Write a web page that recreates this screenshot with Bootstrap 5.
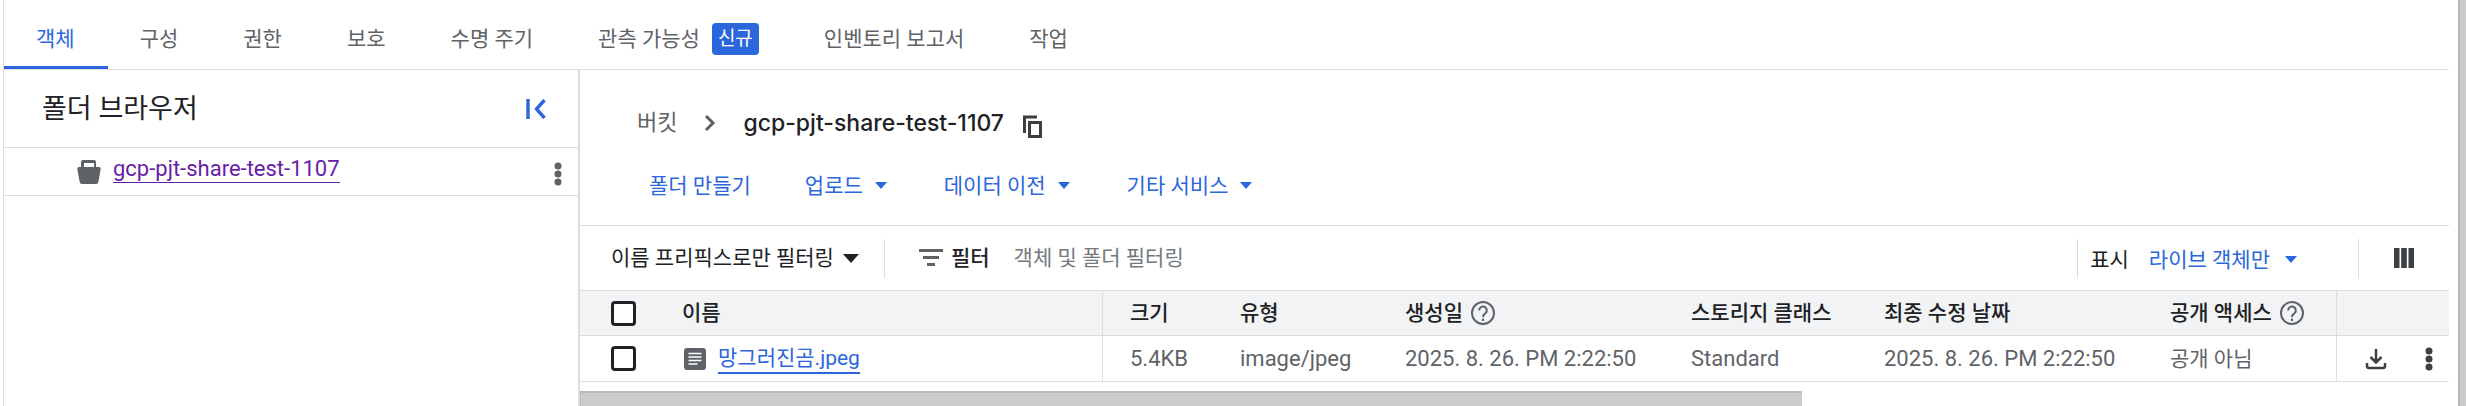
<!DOCTYPE html>
<html lang="ko">
<head>
<meta charset="utf-8">
<meta name="viewport" content="width=device-width, initial-scale=1">
<title>버킷 세부정보</title>
<link rel="stylesheet" href="https://cdn.jsdelivr.net/npm/bootstrap@5.3.0/dist/css/bootstrap.min.css">
<style>
:root{--line:#dadce0;--ink:#202124;--muted:#5f6368;--brand:#2b66dc}
body{font-family:Roboto,"Noto Sans CJK KR",sans-serif;font-size:21px;line-height:30px;color:var(--ink);background:#fff}
svg{display:block;flex:none}
.page-shell{min-height:100vh;padding-left:3px;overflow:hidden}
.page-body{border-left:1px solid var(--line);margin-right:9px;min-width:0}
.scroll-v{width:8px;flex:none;background:#cbcbcb;border-left:2px solid #b8b8b8}
.tabs-bar{height:70px;border-bottom:1px solid var(--line)}
.tabs-bar .nav-link{display:flex;align-items:center;color:var(--muted);padding:12px 33px 0 32px;height:69px;border-bottom:3px solid transparent;white-space:nowrap}
.tabs-bar .nav-link.active{color:var(--brand);border-bottom-color:var(--brand)}
.tag-new{background:var(--brand);color:#fff;font-size:19px;line-height:32px;padding:0 6px;border-radius:4px;margin-left:12px}
.folder-pane{width:576px;border-right:2px solid var(--line);flex:none}
.folder-head{height:78px;border-bottom:1px solid var(--line);padding:0 32px 0 38px}
.folder-head h2{font-size:27px;font-weight:400;line-height:36px;margin:0}
.folder-row{height:48px;border-bottom:1px solid var(--line);padding:4px 16px 0 73px}
.folder-row a{font-size:22px;line-height:26px;color:#681da8;text-decoration:none;border-bottom:1px solid #681da8;margin:0 auto 8px 12px}
.plain-btn{border:0;background:none;padding:0;color:inherit;font:inherit;display:flex;align-items:center;white-space:nowrap}
.crumbs{padding:16px 0 0 57px;height:89px}
.crumbs a{color:var(--muted);text-decoration:none;font-size:22px}
.crumbs h1{font-family:Inter,Roboto,sans-serif;font-size:23px;line-height:34px;font-weight:500;margin:0 18px 0 0}
.chevron{margin:0 22px}
.action-row{height:67px;padding:0 0 13px 69px;border-bottom:1px solid var(--line);color:var(--brand)}
.action-row .plain-btn{gap:11px;margin-right:56px}
.action-row .plain-btn:first-child{margin-right:54px}
.filter-row{height:64px;padding-left:31px}
.rule-v{width:1px;height:39px;background:var(--line)}
.filter-row label{font-weight:500}
.filter-input{border:0;outline:0;padding:0;background:none;min-width:0;color:var(--ink)}
.filter-input::placeholder{color:#75797d;opacity:1}
.show-label{margin:0 20px 0 12px}
.show-pick{color:var(--brand);gap:14px;margin-right:60px}
.columns-btn{margin:0 35px}
.objects{table-layout:fixed;width:100%;margin:0;border-collapse:separate;border-spacing:0;white-space:nowrap}
.objects th,.objects td{padding:0 0 0 27px;vertical-align:middle;border-bottom:1px solid var(--line)}
.objects th{height:46px;font-weight:500;background:#f1f3f4;border-top:1px solid var(--line)}
.objects td{height:46px;color:var(--muted)}
.objects .latin{font-size:22px}
.objects .edge{border-right:1px solid var(--line)}
.objects .pick{padding-left:31px}
.objects .label-col{padding-left:0}
.objects .form-check-input{width:25px;height:25px;margin:0;border:3px solid var(--ink);border-radius:4px;display:block}
.objects a{color:var(--brand);text-decoration:none;border-bottom:2px solid var(--brand);line-height:28px;margin-left:12px}
.c-pick{width:102px}.c-size{width:110px}.c-type{width:165px}.c-date{width:286px}.c-class{width:193px}.c-modified{width:286px}.c-access{width:194px}.c-act{width:112px}
.scroll-h{height:15px;margin-top:9px}
.scroll-h div{height:100%;background:#cbcbcb;border-top:2px solid #b8b8b8;border-left:1px solid #b8b8b8}
</style>
</head>
<body>
<div class="page-shell d-flex">
 <div class="page-body flex-grow-1 d-flex flex-column">
  <nav class="tabs-bar nav flex-nowrap">
   <a class="nav-link active" href="#" aria-current="page">객체</a>
   <a class="nav-link" href="#">구성</a>
   <a class="nav-link" href="#">권한</a>
   <a class="nav-link" href="#">보호</a>
   <a class="nav-link" href="#">수명 주기</a>
   <a class="nav-link" href="#">관측 가능성<span class="tag-new">신규</span></a>
   <a class="nav-link" href="#">인벤토리 보고서</a>
   <a class="nav-link" href="#">작업</a>
  </nav>
  <div class="d-flex flex-grow-1">
   <aside class="folder-pane">
    <div class="folder-head d-flex align-items-center justify-content-between">
     <h2>폴더 브라우저</h2>
     <button class="plain-btn" type="button" aria-label="패널 접기"><svg width="20" height="20" viewBox="0 0 20 20" fill="none" stroke="#2b66dc" stroke-width="3.400"><path d="M2 0v20M18.500 1 10.500 10l8 9"/></svg></button>
    </div>
    <div class="folder-row d-flex align-items-center">
     <svg class="mb-1" width="24" height="24" viewBox="0 0 24 24" fill="#5f6368"><path fill-rule="evenodd" d="M6 0h11q2 0 2 2v5h3q2 0 1.700 2l-2.200 12.500q-.4 2.500-2.500 2.500H5q-2 0-2.400-2.500L.3 9Q0 7 2 7h2V2q0-2 2-2zm1 3v4h10V3z"/></svg>
     <a href="#">gcp-pjt-share-test-1107</a>
     <button class="plain-btn" type="button" aria-label="폴더 메뉴"><svg width="8" height="24" viewBox="0 0 8 24" fill="#5f6368"><circle cx="4" cy="4" r="3.500"/><circle cx="4" cy="12" r="3.500"/><circle cx="4" cy="20" r="3.500"/></svg></button>
    </div>
   </aside>
   <main class="flex-grow-1 d-flex flex-column">
    <div class="crumbs d-flex align-items-center">
     <a href="#">버킷</a>
     <svg class="chevron" width="22" height="18" viewBox="0 0 22 18" fill="none" stroke="#5f6368" stroke-width="3"><path d="M7 2l7 7-7 7"/></svg>
     <h1>gcp-pjt-share-test-1107</h1>
     <button class="plain-btn pt-2" type="button" aria-label="복사"><svg width="22" height="24" viewBox="0 0 22 24" fill="none" stroke="#3c4043" stroke-width="3"><path d="M15 2H2.500v16M7.500 7.500h11v14h-11z"/></svg></button>
    </div>
    <div class="action-row d-flex align-items-center">
     <button class="plain-btn" type="button">폴더 만들기</button>
     <button class="plain-btn" type="button">업로드<svg width="14" height="8" viewBox="0 0 14 8" fill="#2b66dc"><path d="M1 0h12L7 7z"/></svg></button>
     <button class="plain-btn" type="button">데이터 이전<svg width="14" height="8" viewBox="0 0 14 8" fill="#2b66dc"><path d="M1 0h12L7 7z"/></svg></button>
     <button class="plain-btn" type="button">기타 서비스<svg width="14" height="8" viewBox="0 0 14 8" fill="#2b66dc"><path d="M1 0h12L7 7z"/></svg></button>
    </div>
    <div class="filter-row d-flex align-items-center">
     <button class="plain-btn" type="button">이름 프리픽스로만 필터링<svg class="ms-2" width="18" height="9" viewBox="0 0 18 9" fill="#202124"><path d="M1 0h16L9 9z"/></svg></button>
     <span class="rule-v ms-4"></span>
     <svg class="filter-mark" width="58" height="18" viewBox="-34 0 58 18" fill="#5f6368"><path d="M0 0h24v3H0zM4 7h16v3H4zM8 14h8v3H8z"/></svg>
     <label class="ms-2" for="filter">필터</label>
     <input id="filter" class="filter-input flex-grow-1 ms-4" type="text" placeholder="객체 및 폴더 필터링">
     <span class="rule-v"></span>
     <span class="show-label pt-1">표시</span>
     <button class="plain-btn show-pick pt-1" type="button">라이브 객체만<svg width="14" height="8" viewBox="0 0 14 8" fill="#2b66dc"><path d="M1 0h12L7 7z"/></svg></button>
     <span class="rule-v"></span>
     <button class="plain-btn columns-btn" type="button" aria-label="열 표시"><svg width="20" height="20" viewBox="0 0 20 20" fill="#3c4043"><path d="M0 0h5.500v20H0zM7.200 0h5.600v20H7.200zM14.500 0H20v20h-5.500z"/></svg></button>
    </div>
    <table class="objects">
     <colgroup><col class="c-pick"><col><col class="c-size"><col class="c-type"><col class="c-date"><col class="c-class"><col class="c-modified"><col class="c-access"><col class="c-act"></colgroup>
     <thead><tr>
      <th class="pick"><input class="form-check-input" type="checkbox" aria-label="모두 선택"></th>
      <th class="label-col edge">이름</th><th>크기</th><th>유형</th>
      <th><span class="d-flex align-items-center gap-2">생성일<svg width="24" height="24" viewBox="0 0 24 24" fill="none" stroke="#5f6368" stroke-width="2"><circle cx="12" cy="12" r="11"/><path d="M8.200 9.500a3.800 3.800 0 1 1 6.600 2.400C13.300 13.400 12 13.700 12 16M12 17.500v2.500"/></svg></span></th>
      <th>스토리지 클래스</th><th>최종 수정 날짜</th>
      <th class="edge"><span class="d-flex align-items-center gap-2">공개 액세스<svg width="24" height="24" viewBox="0 0 24 24" fill="none" stroke="#5f6368" stroke-width="2"><circle cx="12" cy="12" r="11"/><path d="M8.200 9.500a3.800 3.800 0 1 1 6.600 2.400C13.300 13.400 12 13.700 12 16M12 17.500v2.500"/></svg></span></th>
      <th></th>
     </tr></thead>
     <tbody><tr>
      <td class="pick"><input class="form-check-input" type="checkbox" aria-label="망그러진곰.jpeg 선택"></td>
      <td class="label-col edge"><span class="d-flex align-items-center"><svg width="24" height="24" viewBox="0 0 24 24"><rect x="2" y="1" width="22" height="22" rx="3" fill="#5f6368"/><path d="M6.500 6.500h13M6.500 10h13M6.500 13.500h13M6.500 17h9" stroke="#fff" stroke-width="1.500"/></svg><a href="#">망그러진곰.jpeg</a></span></td>
      <td class="latin">5.4KB</td><td class="latin">image/jpeg</td><td class="latin">2025. 8. 26. PM 2:22:50</td><td class="latin">Standard</td><td class="latin">2025. 8. 26. PM 2:22:50</td><td class="edge">공개 아님</td>
      <td><span class="d-flex align-items-center justify-content-between pe-3">
       <button class="plain-btn" type="button" aria-label="다운로드"><svg width="24" height="24" viewBox="0 0 24 24" fill="none" stroke="#3c4043" stroke-width="2.500"><path d="M12 2v13M6.500 10l5.500 5.500 5.500-5.500M3 16v3q0 2 2 2h14q2 0 2-2v-3"/></svg></button>
       <button class="plain-btn" type="button" aria-label="객체 메뉴"><svg width="8" height="24" viewBox="0 0 8 24" fill="#3c4043"><circle cx="4" cy="4" r="3.500"/><circle cx="4" cy="12" r="3.500"/><circle cx="4" cy="20" r="3.500"/></svg></button></span></td>
     </tr></tbody>
    </table>
    <div class="scroll-h"><div style="width:65.4%"></div></div>
   </main>
  </div>
 </div>
 <div class="scroll-v"></div>
</div>
<script src="https://cdn.jsdelivr.net/npm/bootstrap@5.3.0/dist/js/bootstrap.bundle.min.js"></script>
</body>
</html>
